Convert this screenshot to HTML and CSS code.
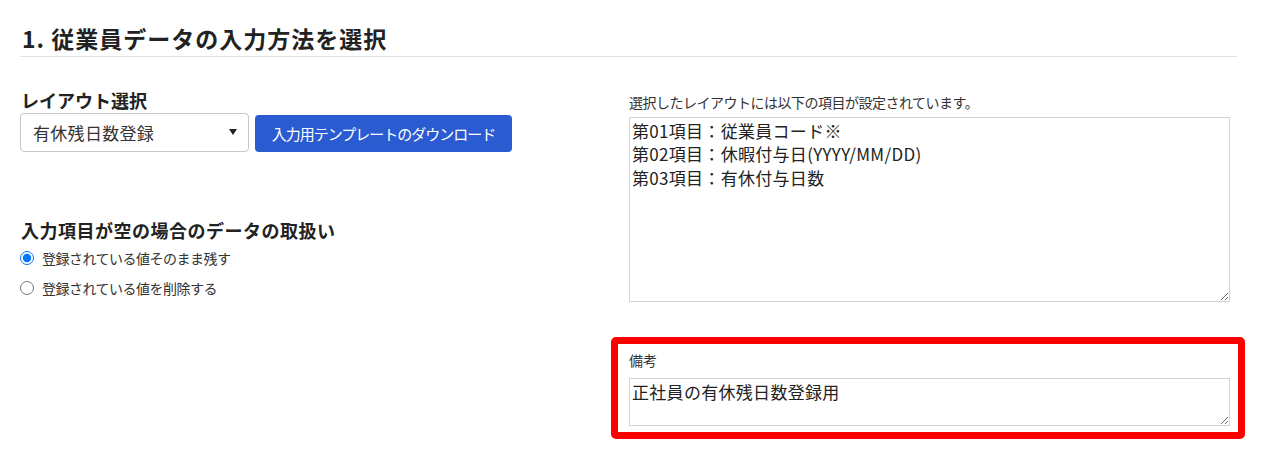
FILE: index.html
```html
<!DOCTYPE html>
<html lang="ja">
<head>
<meta charset="utf-8">
<title>従業員データの入力方法を選択</title>
<link rel="stylesheet" href="styles.css">
</head>
<body>
<div class="page">
  <h2 class="section-title">1. 従業員データの入力方法を選択</h2>
  <div class="columns">
    <div class="col-left">
      <div class="field-label first">レイアウト選択</div>
      <div class="layout-row">
        <div class="select-wrap">
          <select class="layout-select">
            <option>有休残日数登録</option>
          </select>
        </div>
        <button class="btn-primary" type="button">入力用テンプレートのダウンロード</button>
      </div>
      <div class="field-label second">入力項目が空の場合のデータの取扱い</div>
      <label class="radio-row"><input type="radio" name="empty" checked><span>登録されている値そのまま残す</span></label>
      <label class="radio-row"><input type="radio" name="empty"><span>登録されている値を削除する</span></label>
    </div>
    <div class="col-right">
      <div class="note">選択したレイアウトには以下の項目が設定されています。</div>
      <textarea class="items-area">第01項目：従業員コード※
第02項目：休暇付与日(YYYY/MM/DD)
第03項目：有休付与日数</textarea>
      <div class="remarks">
        <div class="remarks-label">備考</div>
        <textarea class="remarks-area">正社員の有休残日数登録用</textarea>
        <div class="highlight"></div>
      </div>
    </div>
  </div>
</div>
</body>
</html>
```

FILE: styles.css
```css
* { box-sizing: border-box; }
html, body { background: #fff; }
body {
  margin: 0;
  min-height: 454px;
  color: #333;
  font-family: "Noto Sans CJK JP", "Noto Sans", sans-serif;
}
.page {
  padding: 0 39px 28px 20px;
}
.section-title {
  margin: 23px 0 0;
  padding: 0 0 3px 2px;
  font-size: 23px;
  line-height: 30px;
  font-weight: 700;
  letter-spacing: 1px;
  color: #222;
  border-bottom: 1px solid #e2e2e2;
}
.columns {
  display: grid;
  grid-template-columns: 609px 601px;
}
.field-label {
  font-size: 18px;
  line-height: 22px;
  font-weight: 700;
  color: #222;
  padding-left: 1px;
}
.field-label.first { margin-top: 32px; }
.field-label.second { margin-top: 67px; letter-spacing: 0.5px; }
.layout-row {
  display: flex;
  align-items: flex-end;
  gap: 6px;
  margin-top: 2px;
}
.select-wrap {
  position: relative;
  width: 229px;
  height: 39px;
}
.select-wrap::after {
  content: "";
  position: absolute;
  right: 12px;
  top: 16px;
  border-left: 4.5px solid transparent;
  border-right: 4.5px solid transparent;
  border-top: 6px solid #222;
  pointer-events: none;
}
.layout-select {
  appearance: none;
  -webkit-appearance: none;
  width: 100%;
  height: 100%;
  border: 1px solid #c8c8c8;
  border-radius: 4px;
  background: #fff;
  padding: 0 0 0 12px;
  font-family: inherit;
  font-size: 17px;
  letter-spacing: 0.3px;
  color: #333;
}
.btn-primary {
  width: 257px;
  height: 37px;
  border: none;
  border-radius: 4px;
  background: #2b5bd1;
  color: #fff;
  font-family: inherit;
  font-size: 15px;
  letter-spacing: -1px;
  padding: 0;
}
.radio-row {
  display: flex;
  align-items: center;
  height: 30px;
  font-size: 14px;
  letter-spacing: -0.5px;
  color: #333;
}
.radio-row:first-of-type { margin-top: 2px; }
.radio-row input {
  margin: 0 8px 0 0;
  width: 14px;
  height: 14px;
}
.note {
  margin-top: 35px;
  font-size: 14px;
  line-height: 20px;
  letter-spacing: -0.5px;
  color: #333;
}
.items-area,
.remarks-area {
  display: block;
  width: 601px;
  border: 1px solid #d4d4d4;
  padding: 1px 2px;
  font-family: inherit;
  font-size: 17px;
  line-height: 23.3px;
  letter-spacing: 0.3px;
  color: #222;
  resize: both;
}
.items-area {
  margin-top: 5px;
  height: 185px;
}
.remarks {
  position: relative;
  margin-top: 48px;
}
.remarks-label {
  font-size: 14px;
  line-height: 20px;
  color: #333;
}
.remarks-area {
  margin-top: 8px;
  height: 48px;
}
.highlight {
  position: absolute;
  top: -13px;
  left: -18px;
  right: -15px;
  bottom: -13px;
  border: 7px solid #ff0000;
  border-radius: 5px;
  pointer-events: none;
}
```
